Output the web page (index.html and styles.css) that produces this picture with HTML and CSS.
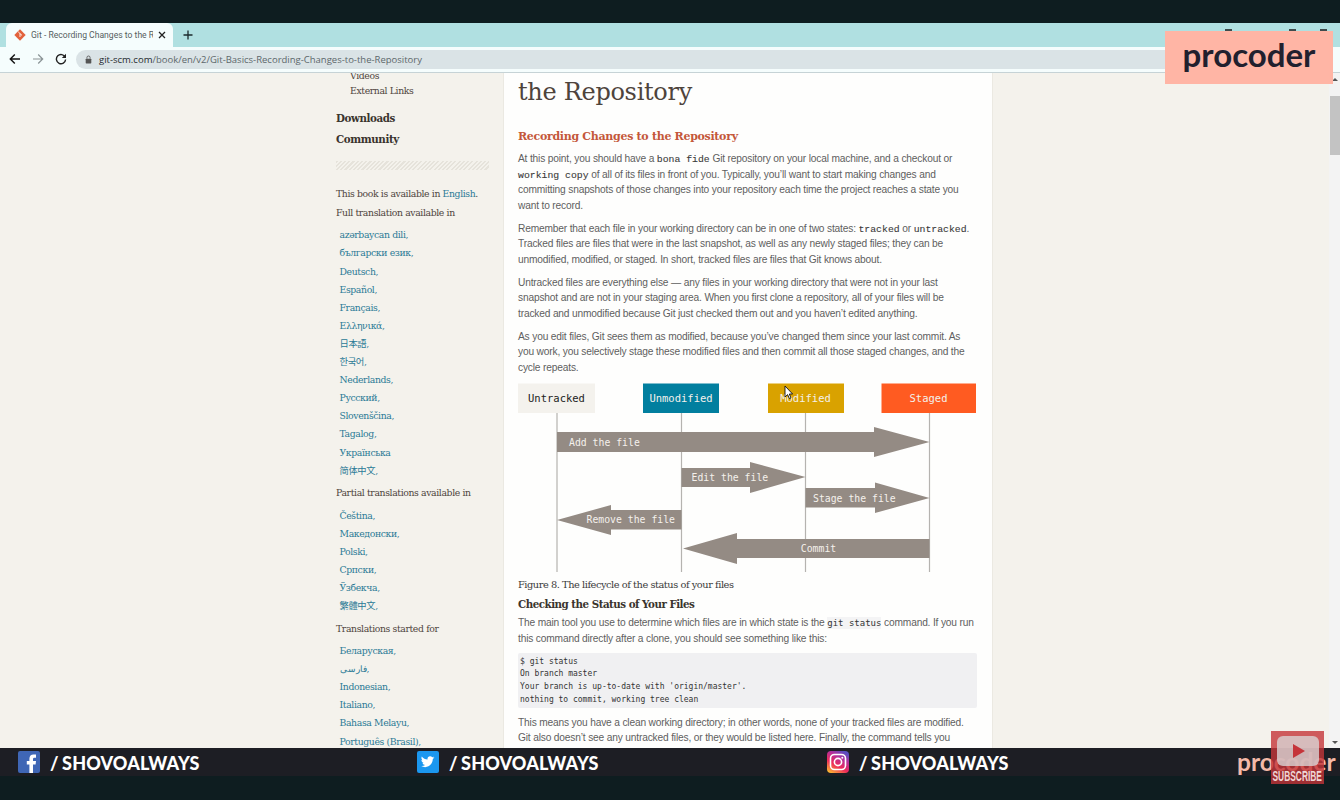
FILE: index.html
```html
<!DOCTYPE html>
<html lang="en">
<head>
<meta charset="utf-8">
<title>Git - Recording Changes to the Repository</title>
<link rel="stylesheet" href="styles.css">
</head>
<body>
<div class="topband"></div>
<div class="tabstrip">
  <div class="tab">
    <svg class="favicon" viewBox="0 0 12 12"><path d="M6 0.3 L11.7 6 L6 11.7 L0.3 6 Z" fill="#e2623c"/><path d="M4.2 2.8 L6 4.6 V8 M6 4.6 L8 6.4" stroke="#fff" stroke-width="0.9" fill="none"/></svg>
    <span class="tabtitle">Git - Recording Changes to the R</span>
    <svg class="tabclose" viewBox="0 0 8 8"><path d="M1 1 L7 7 M7 1 L1 7" stroke="#222" stroke-width="1.3"/></svg>
  </div>
  <svg class="newtab" viewBox="0 0 10 10"><path d="M5 .5 V9.5 M.5 5 H9.5" stroke="#1c2a2c" stroke-width="1.3"/></svg>
  <div class="winctl"><span class="wc"></span><span class="wc"></span><span class="wc"></span></div>
</div>
<div class="toolbar">
  <svg class="navicon" viewBox="0 0 12 12"><path d="M11 6 H1.5 M5.8 1.5 L1.3 6 L5.8 10.5" stroke="#111" stroke-width="1.4" fill="none"/></svg>
  <svg class="navicon" viewBox="0 0 12 12"><path d="M1 6 H10.5 M6.2 1.5 L10.7 6 L6.2 10.5" stroke="#8b9496" stroke-width="1.2" fill="none"/></svg>
  <svg class="navicon" viewBox="0 0 12 12"><path d="M10.2 4.2 A4.6 4.6 0 1 0 10.6 6.5" stroke="#222" stroke-width="1.4" fill="none"/><path d="M11 0.8 V5 H6.8 Z" fill="#222"/></svg>
  <div class="urlbar">
    <svg class="lock" viewBox="0 0 8 10"><rect x="0.8" y="4" width="6.4" height="5.5" rx="0.7" fill="#555"/><path d="M2.2 4 V2.8 A1.8 1.8 0 0 1 5.8 2.8 V4" stroke="#555" fill="none"/></svg>
    <span class="url"><b>git-scm.com</b>/book/en/v2/Git-Basics-Recording-Changes-to-the-Repository</span>
  </div>
</div>
<div class="page">
  <aside class="sidebar">
    <p class="subnav">Videos</p>
    <p class="subnav">External Links</p>
    <p class="mainnav first">Downloads</p>
    <p class="mainnav">Community</p>
    <div class="hatch"></div>
    <p class="note">This book is available in <a>English</a>.</p>
    <p class="note">Full translation available in</p>
    <ul class="langs">
      <li><a>azərbaycan dili</a>,</li><li><a>български език</a>,</li><li><a>Deutsch</a>,</li><li><a>Español</a>,</li><li><a>Français</a>,</li><li><a>Ελληνικά</a>,</li><li><a>日本語</a>,</li><li><a>한국어</a>,</li><li><a>Nederlands</a>,</li><li><a>Русский</a>,</li><li><a>Slovenščina</a>,</li><li><a>Tagalog</a>,</li><li><a>Українська</a></li><li><a>简体中文</a>,</li>
    </ul>
    <p class="note">Partial translations available in</p>
    <ul class="langs">
      <li><a>Čeština</a>,</li><li><a>Македонски</a>,</li><li><a>Polski</a>,</li><li><a>Српски</a>,</li><li><a>Ўзбекча</a>,</li><li><a>繁體中文</a>,</li>
    </ul>
    <p class="note">Translations started for</p>
    <ul class="langs">
      <li><a>Беларуская</a>,</li><li><a>فارسی</a>,</li><li><a>Indonesian</a>,</li><li><a>Italiano</a>,</li><li><a>Bahasa Melayu</a>,</li><li><a>Português (Brasil)</a>,</li>
    </ul>
  </aside>
  <main class="content">
    <h1>2.2 Git Basics - Recording Changes to<br>the Repository</h1>
    <h2>Recording Changes to the Repository</h2>
    <p>At this point, you should have a <code class="term">bona fide</code> Git repository on your local machine, and a checkout or <code class="term">working copy</code> of all of its files in front of you. Typically, you’ll want to start making changes and committing snapshots of those changes into your repository each time the project reaches a state you want to record.</p>
    <p>Remember that each file in your working directory can be in one of two states: <code class="term">tracked</code> or <code class="term">untracked</code>. Tracked files are files that were in the last snapshot, as well as any newly staged files; they can be unmodified, modified, or staged. In short, tracked files are files that Git knows about.</p>
    <p>Untracked files are everything else — any files in your working directory that were not in your last snapshot and are not in your staging area. When you first clone a repository, all of your files will be tracked and unmodified because Git just checked them out and you haven’t edited anything.</p>
    <p>As you edit files, Git sees them as modified, because you’ve changed them since your last commit. As you work, you selectively stage these modified files and then commit all those staged changes, and the cycle repeats.</p>
    <svg class="diagram" viewBox="0 0 458 190" width="458" height="190">
      <g class="vlines">
        <path d="M39 30 V189 M163.500 30 V189 M287.500 30 V189 M411.500 30 V189"/>
      </g>
      <rect x="0" y="0.500" width="77" height="29.500" fill="#f4f2ed"/>
      <rect x="125" y="0.500" width="76" height="29.500" fill="#027f9f"/>
      <rect x="250" y="0.500" width="76" height="29.500" fill="#d9a200"/>
      <rect x="363.500" y="0.500" width="94.500" height="29.500" fill="#ff5b21"/>
      <g class="arrows">
        <path d="M39 49 H356 V44 L411.500 59 L356 74 V69 H39 Z"/>
        <path d="M163.500 85 H232 V79 L287.500 94 L232 110 V104 H163.500 Z"/>
        <path d="M287.500 105 H357 V99.500 L411.500 115 L357 130 V124.500 H287.500 Z"/>
        <path d="M163.500 127 V146.500 H93 V152 L39 137 L93 122 V127 Z"/>
        <path d="M411.500 156 V175 H219 V181 L165 165.500 L219 150 V156 Z"/>
      </g>
      <g class="boxlabels">
        <text x="38.500" y="19" class="dark">Untracked</text>
        <text x="163" y="19">Unmodified</text>
        <text x="287.500" y="19">Modified</text>
        <text x="410.500" y="18.500">Staged</text>
      </g>
      <g class="arrowlabels">
        <text x="51" y="63">Add the file</text>
        <text x="173.500" y="98">Edit the file</text>
        <text x="295" y="119">Stage the file</text>
        <text x="157" y="140" class="end">Remove the file</text>
        <text x="300.500" y="169" class="mid">Commit</text>
      </g>
    </svg>
    <p class="caption">Figure 8. The lifecycle of the status of your files</p>
    <h3>Checking the Status of Your Files</h3>
    <p>The main tool you use to determine which files are in which state is the <code class="cmd">git status</code> command. If you run this command directly after a clone, you should see something like this:</p>
    <pre class="codeblock">$ git status
On branch master
Your branch is up-to-date with 'origin/master'.
nothing to commit, working tree clean</pre>
    <p>This means you have a clean working directory; in other words, none of your tracked files are modified. Git also doesn’t see any untracked files, or they would be listed here. Finally, the command tells you</p>
  </main>
  <div class="scrollbar">
    <span class="sarrow up"></span>
    <div class="thumb"></div>
    <span class="sarrow down"></span>
  </div>
</div>
<footer class="social">
  <div class="handle fb">
    <svg class="sicon" viewBox="0 0 22 22"><rect width="22" height="22" rx="2" fill="#3f66b5"/><path d="M15 22 V13.500 H17.600 L18 10 H15 V8.200 C15 7.200 15.400 6.700 16.600 6.700 H18 V3.600 C17.400 3.500 16.500 3.400 15.500 3.400 C13 3.400 11.400 4.900 11.400 7.700 V10 H8.800 V13.500 H11.400 V22 Z" fill="#fff"/></svg>
    <span>/ SHOVOALWAYS</span>
  </div>
  <div class="handle tw">
    <svg class="sicon" viewBox="0 0 22 22"><rect width="22" height="22" rx="2" fill="#1b97ef"/><path d="M17.500 6.600 C17 6.800 16.500 7 15.900 7 C16.500 6.700 16.900 6.100 17.100 5.500 C16.500 5.800 15.900 6.100 15.300 6.200 C14.100 4.900 12 5 11 6.300 C10.500 7 10.400 7.800 10.600 8.600 C8.300 8.500 6.200 7.400 4.800 5.600 C4.100 6.900 4.500 8.500 5.700 9.300 C5.200 9.300 4.800 9.200 4.400 9 C4.400 10.400 5.300 11.500 6.700 11.900 C6.300 12 5.900 12 5.500 11.900 C5.900 13 6.900 13.800 8.100 13.900 C7 14.800 5.600 15.200 4.200 15 C7.500 17.100 11.900 16.200 14.100 13.100 C15.200 11.600 15.800 9.900 15.800 8.100 C16.400 7.700 17 7.200 17.500 6.600 Z" fill="#fff"/></svg>
    <span>/ SHOVOALWAYS</span>
  </div>
  <div class="handle ig">
    <svg class="sicon" viewBox="0 0 22 22"><defs><linearGradient id="iggrad" x1="0.100" y1="1" x2="0.700" y2="0"><stop offset="0" stop-color="#fdc12f"/><stop offset="0.400" stop-color="#ee2a5a"/><stop offset="0.750" stop-color="#b0309f"/><stop offset="1" stop-color="#5a4cc0"/></linearGradient></defs><rect width="22" height="22" rx="4" fill="url(#iggrad)"/><rect x="3.500" y="3.500" width="15" height="15" rx="4" fill="none" stroke="#fff" stroke-width="1.600"/><circle cx="11" cy="11" r="3.600" fill="none" stroke="#fff" stroke-width="1.600"/><circle cx="15.300" cy="6.700" r="1" fill="#fff"/></svg>
    <span>/ SHOVOALWAYS</span>
  </div>
  <span class="footbrand">procoder</span>
</footer>
<div class="bottomband"></div>

<div class="logo"><span>procoder</span></div>
<svg class="cursor" viewBox="0 0 10 15"><path d="M1 1 V12 L3.600 9.600 L5.400 13.600 L7 12.900 L5.300 9 H8.600 Z" fill="#fff" stroke="#111" stroke-width="0.900"/></svg>
<div class="subscribe">
  <svg class="yticon" viewBox="0 0 42 30"><rect width="42" height="30" rx="6" fill="#d9d4d4" fill-opacity="0.800"/><path d="M16 8 L28 15 L16 22 Z" fill="#c5343a"/></svg>
  <span class="subtext">SUBSCRIBE</span>
</div>
</body>
</html>
```
FILE: styles.css
```css
* { box-sizing: border-box; }
html, body { margin: 0; padding: 0; }
body {
  width: 1340px;
  height: 800px;
  overflow: hidden;
  position: relative;
  display: flex;
  flex-direction: column;
  background: #0e1d20;
  font-family: "Liberation Sans", Arial, sans-serif;
}
.topband { height: 23px; flex: none; background: #0e1d20; }
.tabstrip {
  height: 24px;
  flex: none;
  display: flex;
  align-items: flex-end;
  padding-left: 6px;
  background: #b0e0e1;
}
.tab {
  width: 167px;
  height: 24px;
  display: flex;
  align-items: center;
  background: #f5fdfd;
  border-radius: 6px 6px 0 0;
  padding: 0 7px 0 8px;
}
.favicon { width: 12px; height: 12px; flex: none; }
.tabtitle {
  width: 122px;
  margin-left: 5px;
  padding-bottom: 1px;
  font: 8.600px "Roboto", "Liberation Sans", sans-serif;
  color: #555d5f;
  white-space: nowrap;
  overflow: hidden;
}
.tabclose { width: 8px; height: 8px; margin-left: 5px; flex: none; }
.newtab { width: 10px; height: 10px; margin: 0 0 7px 10px; flex: none; }
.winctl {
  margin-left: auto;
  margin-right: 13px;
  align-self: flex-start;
  display: flex;
  padding-top: 6px;
}
.wc { display: block; width: 7px; height: 2px; background: #3e4a4c; }
.wc:nth-child(2) { margin: 0 24px 0 57px; }
.toolbar {
  height: 26px;
  flex: none;
  display: flex;
  align-items: center;
  padding: 0 0 1px 9px;
  gap: 11px;
  background: #f5fdfd;
  border-bottom: 1px solid #c6d3d6;
}
.navicon { width: 12px; height: 12px; flex: none; }
.urlbar {
  flex: none;
  width: 1180px;
  height: 19px;
  margin-left: -2px;
  display: flex;
  align-items: center;
  padding-left: 9px;
  background: #dae3e6;
  border-radius: 10px;
}
.lock { width: 7px; height: 9px; flex: none; }
.url {
  margin-left: 7px;
  font: 9.500px "Open Sans", "Liberation Sans", sans-serif;
  color: #5d676b;
  white-space: nowrap;
}
.url b { font-weight: 400; color: #1f2a2e; }

.page {
  height: 675px;
  flex: none;
  display: flex;
  padding-left: 336px;
  overflow: hidden;
  background: #f4f2ec;
}
.sidebar {
  width: 153px;
  flex: none;
  margin-top: -5px;
  font-family: "DejaVu Serif", "Noto Sans CJK JP", serif;
  font-size: 9.300px;
  letter-spacing: -0.380px;
  color: #4e443c;
  white-space: nowrap;
}
.sidebar p { margin: 0; }
.subnav { padding-left: 14px; line-height: 15px; }
.mainnav { font-size: 10.300px; font-weight: 700; line-height: 21px; color: #3a342e; letter-spacing: -0.400px; }
.mainnav.first { margin-top: 10px; }
.hatch {
  height: 9px;
  margin: 11px 0 14px;
  background: repeating-linear-gradient(135deg, #e6e3db 0 1.500px, #f4f2ec 1.500px 3px);
}
.note { line-height: 19px; }
.langs { list-style: none; margin: 4.400px 0 3.500px; padding: 0 0 0 3.500px; }
.langs li { line-height: 18.100px; height: 18.100px; color: #3f7f97; }
.langs a, .note a { color: #2b7a96; }

.content {
  width: 490px;
  flex: none;
  margin: 0 0 0 14px;
  padding: 0 15px 0 14px;
  background: #fefefd;
  border-left: 1px solid #ebe9e2;
  border-right: 1px solid #ebe9e2;
  font-size: 10.200px;
  letter-spacing: -0.170px;
  line-height: 15.600px;
  color: #5f5f5f;
  overflow: hidden;
}
.content h1 {
  margin: -30px 0 0;
  font: 400 24px/33px "DejaVu Serif", serif;
  color: #4e443c;
  white-space: nowrap;
  letter-spacing: -0.300px;
}
.content h2 {
  margin: 20px 0 6px;
  font: 700 11px/16px "DejaVu Serif", serif;
  letter-spacing: -0.300px;
  color: #c4573a;
}
.content p { margin: 0 0 7.200px; }
.term { font: 400 9.800px "Liberation Mono", monospace; letter-spacing: 0; color: #3a3a3a; -webkit-text-stroke: 0.100px #3a3a3a; }
.cmd { font: 9px "DejaVu Sans Mono", monospace; letter-spacing: 0; color: #333; background: #f4f4f5; padding: 1px 0; }
.diagram { display: block; margin-top: 8.200px; letter-spacing: 0; }
.vlines path { stroke: #b5b3b0; stroke-width: 1.200; fill: none; }
.arrows path { fill: #948b84; }
.diagram text { font-family: "DejaVu Sans Mono", monospace; font-size: 10.500px; fill: #f4f1ec; }
.arrowlabels text { font-size: 9.800px; }
.boxlabels text { text-anchor: middle; }
.boxlabels .dark { fill: #222; }
.arrowlabels .end { text-anchor: end; }
.arrowlabels .mid { text-anchor: middle; }
.content .caption {
  margin: 3.500px 0 3px;
  font: 9.800px/16px "DejaVu Serif", serif;
  letter-spacing: -0.450px;
  color: #3a3a3a;
}
.content h3 {
  margin: 0 0 2px;
  font: 700 10.300px/17px "DejaVu Serif", serif;
  letter-spacing: -0.500px;
  color: #3a342e;
}
.codeblock {
  margin: -0.500px 0 7px;
  height: 55px;
  padding: 3px 2px 0;
  border-radius: 2px;
  background: #f0f0f2;
  font: 8px/12.600px "DejaVu Sans Mono", monospace;
  letter-spacing: 0;
  color: #333;
  white-space: pre;
}
.scrollbar {
  width: 11px;
  flex: none;
  margin-left: auto;
  display: flex;
  flex-direction: column;
  align-items: center;
  background: #f3f3f3;
}
.thumb { width: 10px; height: 59px; margin-top: 15px; background: #c3c3c3; }
.sarrow { width: 0; height: 0; border-left: 3px solid transparent; border-right: 3px solid transparent; }
.sarrow.up { margin-top: 5px; border-bottom: 3px solid #555; }
.sarrow.down { margin-top: auto; margin-bottom: 4px; border-top: 3px solid #555; }

.social {
  height: 28px;
  flex: none;
  position: relative;
  display: flex;
  align-items: center;
  background: #1d1e24;
  padding-left: 18px;
}
.handle {
  display: flex;
  align-items: center;
  gap: 10px;
  font: 900 18px "Lato", sans-serif;
  color: #fff;
  white-space: nowrap;
  letter-spacing: 0.150px;
  word-spacing: -1px;
}
.handle span { margin-top: 2px; }
.handle.fb { width: 399px; }
.handle.tw { width: 410px; }
.sicon { width: 22px; height: 22px; flex: none; }
.footbrand {
  position: absolute;
  left: 1237px;
  top: -1px;
  font: 700 24.500px/30px "Lato", sans-serif;
  color: #f4b9a8;
}
.bottomband { flex: 1; background: #0e1d20; }

.logo {
  position: absolute;
  left: 1165px;
  top: 31px;
  width: 168px;
  height: 53px;
  background: #ffb5a5;
  display: flex;
  align-items: center;
  justify-content: center;
  font: 700 33px "Lato", sans-serif;
  color: #21202e;
}
.logo span { margin-top: -7px; }
.cursor { position: absolute; left: 784px; top: 385px; width: 10px; height: 15px; }
.subscribe {
  position: absolute;
  left: 1271px;
  top: 731px;
  width: 53px;
  height: 53px;
  background: rgba(196, 52, 56, 0.800);
  display: flex;
  flex-direction: column;
  align-items: center;
}
.yticon { display: block; width: 42px; height: 30px; margin-top: 5px; }
.subtext {
  margin-top: 4px;
  font: 700 14px/13px "Liberation Sans", sans-serif;
  color: #f0d6d6;
  transform: scaleX(0.600);
  white-space: nowrap;
}
```
